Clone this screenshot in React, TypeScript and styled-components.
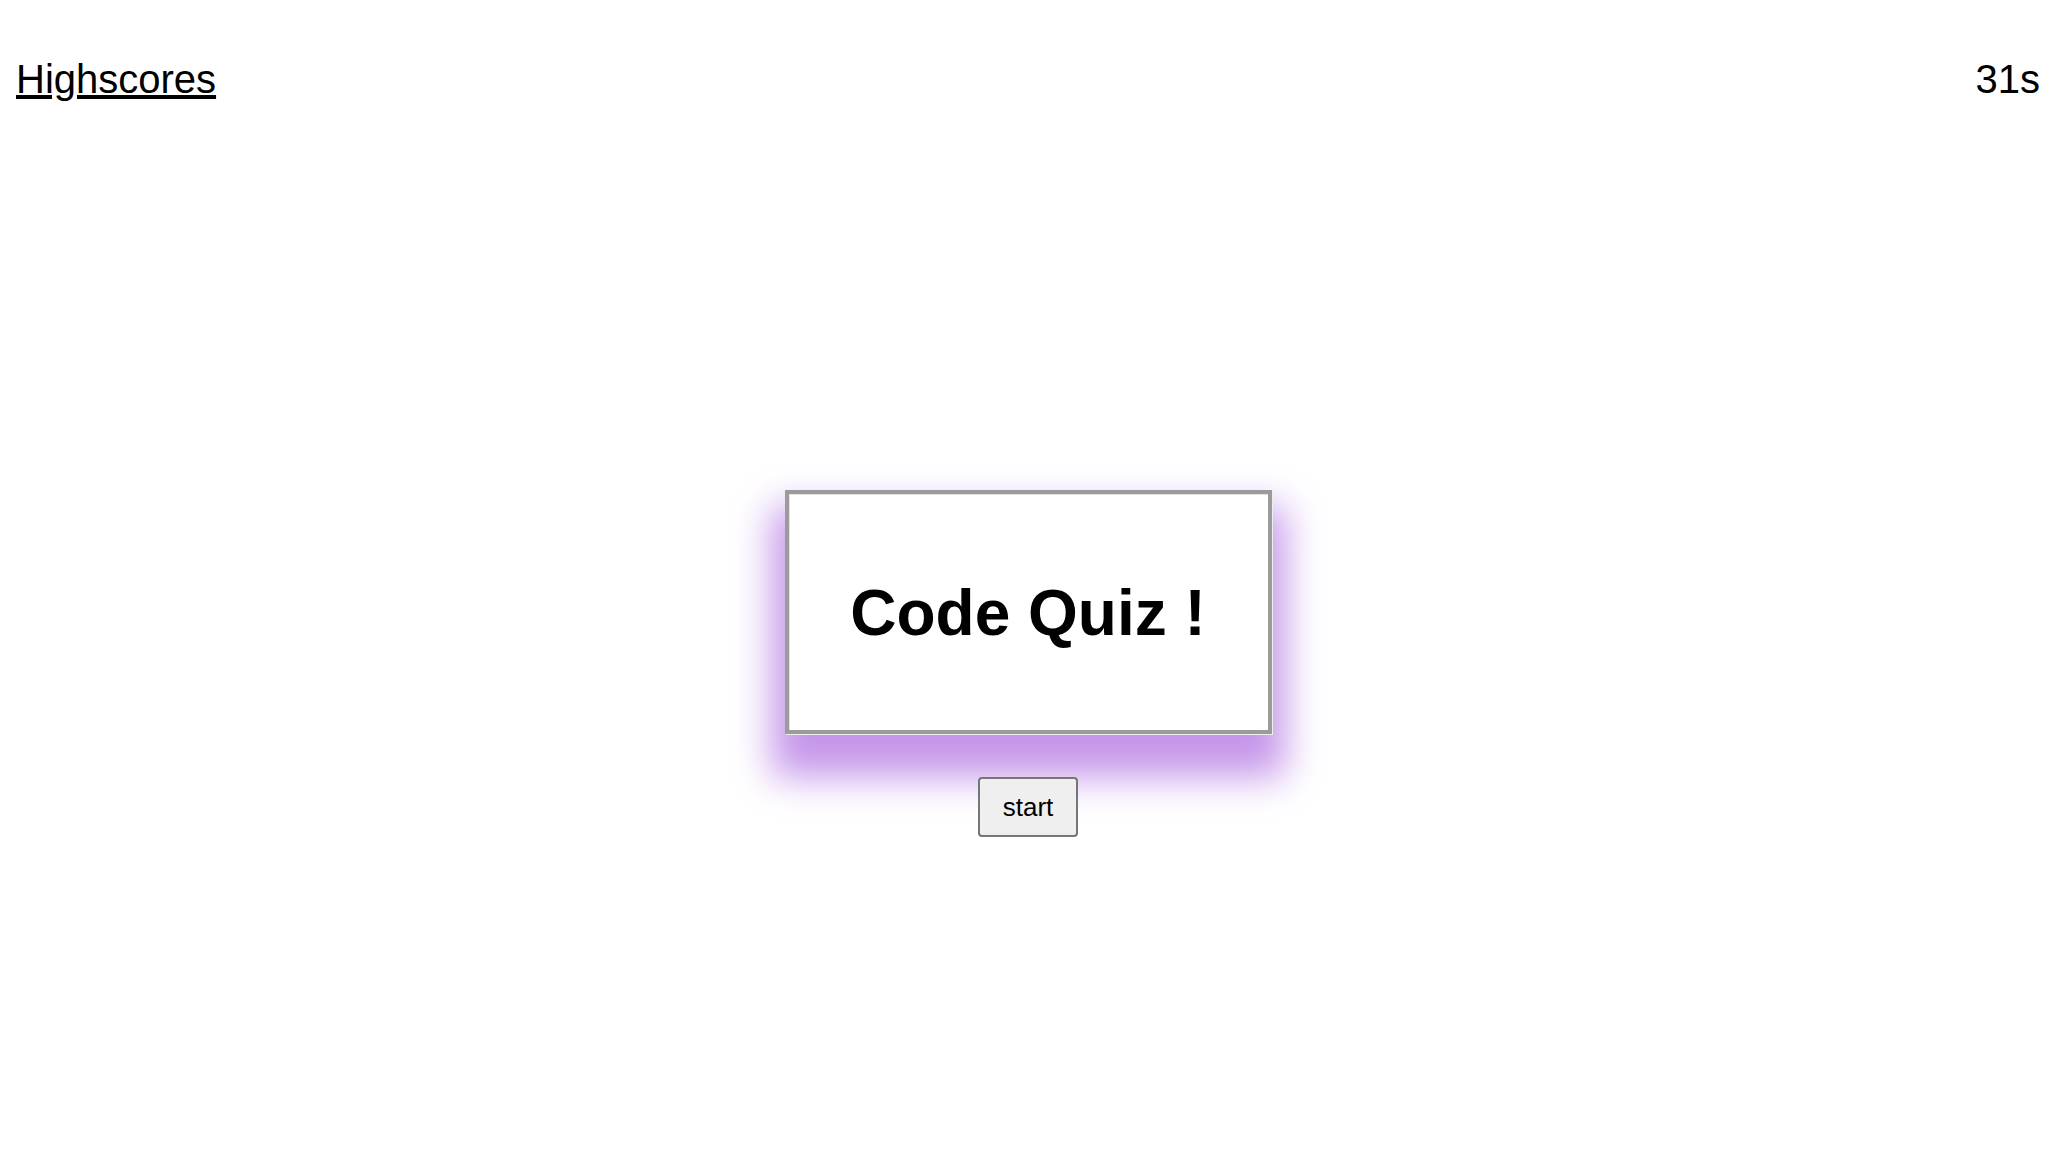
import React from "react";
import styled, { createGlobalStyle } from "styled-components";

const GlobalStyle = createGlobalStyle`
  html, body {
    margin: 0;
    padding: 0;
    background: #ffffff;
    font-family: "Liberation Sans", Arial, sans-serif;
    color: #000000;
  }
  * { box-sizing: border-box; }
`;

const Page = styled.div`
  min-height: 1158px;
  display: flex;
  flex-direction: column;
`;

const Header = styled.header`
  display: flex;
  justify-content: space-between;
  align-items: flex-start;
  padding: 56px 16px 0 16px;
  font-size: 40px;
  line-height: 46px;
`;

const ScoresLink = styled.a`
  color: #000000;
  text-decoration: underline;
  cursor: pointer;
`;

const Timer = styled.span`
  color: #000000;
`;

const Main = styled.main`
  display: flex;
  flex-direction: column;
  align-items: center;
  padding-top: 388px;
  gap: 43px;
`;

const TitleCard = styled.section`
  width: 487px;
  height: 244px;
  display: flex;
  align-items: center;
  justify-content: center;
  background: #ffffff;
  border: 4px solid #9b9b9b;
  box-shadow: inset 1px 1px 0 #e2e2e2, 1px 1px 0 #eeeeee,
    0 30px 36px 13px #c596ea;
`;

const Title = styled.h1`
  margin: 2px 0 0 0;
  font-size: 64px;
  font-weight: 700;
  line-height: 74px;
`;

const StartButton = styled.button`
  width: 100px;
  height: 60px;
  display: flex;
  align-items: center;
  justify-content: center;
  padding: 0;
  background: #efefef;
  border: 2px solid #767676;
  border-radius: 4px;
  font-family: "Liberation Sans", Arial, sans-serif;
  font-size: 26px;
  color: #000000;
  cursor: pointer;
`;

export default function App() {
  return (
    <Page>
      <GlobalStyle />
      <Header>
        <ScoresLink>Highscores</ScoresLink>
        <Timer>31s</Timer>
      </Header>
      <Main>
        <TitleCard>
          <Title>Code Quiz !</Title>
        </TitleCard>
        <StartButton>start</StartButton>
      </Main>
    </Page>
  );
}
